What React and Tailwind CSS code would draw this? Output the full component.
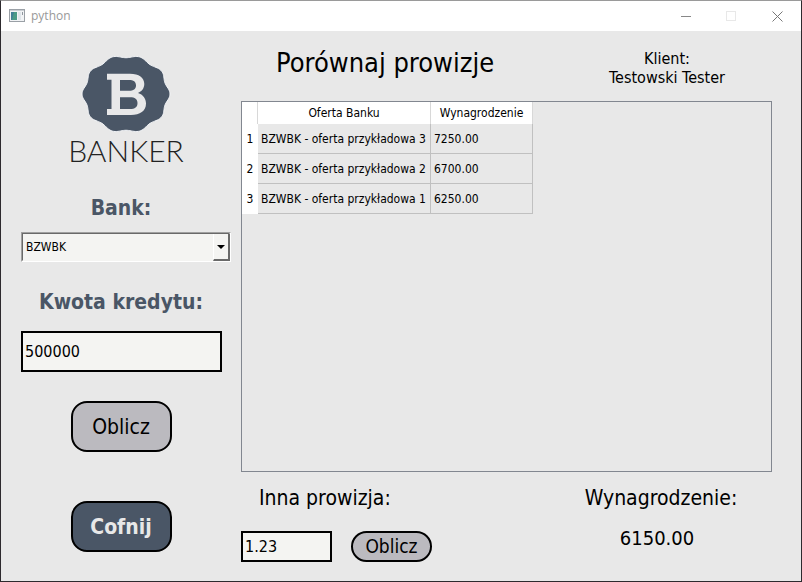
const badge = (() => {
  const pts = [];
  for (let i = 0; i <= 200; i++) {
    const t = (i / 200) * Math.PI * 2;
    const r = 0.965 + 0.035 * Math.cos(10 * t);
    pts.push(`${(48 + 44 * r * Math.cos(t)).toFixed(2)} ${(42 + 39 * r * Math.sin(t)).toFixed(2)}`);
  }
  return `M${pts.join("L")}Z`;
})();

const offers = [
  ["BZWBK - oferta przykładowa 3", "7250.00"],
  ["BZWBK - oferta przykładowa 2", "6700.00"],
  ["BZWBK - oferta przykładowa 1", "6250.00"],
];

function TitleBar() {
  return (
    <header className="flex h-[30px] items-center bg-white pl-2 font-['Open_Sans',sans-serif] text-xs text-[#999999]">
      <svg width="16" height="14" viewBox="0 0 16 14" aria-hidden="true">
        <rect x="0.5" y="0.5" width="15" height="12" fill="#f1f3f5" stroke="#9aa0a6" />
        <path d="M1 1.500H15" stroke="#c9ced3" />
        <rect x="2" y="3" width="6" height="8" fill="#4a9a86" />
        <path d="M2 3H5L3 11H2Z" fill="#3f7f95" />
        <rect x="9" y="3" width="3" height="8" fill="#dfe5ea" />
        <rect x="13" y="3" width="1" height="3" fill="#8f979f" />
      </svg>
      <span className="ml-1.5 flex-1">python</span>
      <div className="flex h-full pr-px">
        <button aria-label="Minimalizuj" className="grid h-full w-[45px] place-items-center">
          <svg width="10" height="10"><path d="M0 5.5H10" stroke="#888" /></svg>
        </button>
        <button aria-label="Maksymalizuj" disabled className="grid h-full w-[46px] place-items-center">
          <svg width="10" height="10"><rect x="0.5" y="0.5" width="9" height="9" fill="none" stroke="#e8e8e8" /></svg>
        </button>
        <button aria-label="Zamknij" className="grid h-full w-[46px] place-items-center">
          <svg width="11" height="11"><path d="M0.5 0.5L10.5 10.5M10.5 0.5L0.5 10.5" stroke="#777" /></svg>
        </button>
      </div>
    </header>
  );
}

function Logo() {
  return (
    <div className="flex flex-col items-center">
      <svg width="96" height="84" viewBox="0 0 96 84" aria-hidden="true">
        <path d={badge} fill="#4a5666" stroke="#f4f6f9" strokeWidth="1" />
        <path
          fillRule="evenodd"
          fill="#e8e8e9"
          d="M29 21.700H52C61 21.700 66.300 25.500 66.300 32C66.300 36.500 63.500 39.500 60 41C65 42.500 68 46.500 68 51.500C68 59 62 63 53 63H29V57H33.500V27.700H29ZM42 28V38.700H51C55.500 38.700 58 37 58 33.400C58 29.800 55.500 28 51 28ZM42 45.300V57H52C57 57 59.500 55 59.500 51C59.500 47.300 57 45.300 52 45.300Z"
        />
      </svg>
      <span className="font-[Lato,sans-serif] text-[30px] leading-7 font-light text-[#222222]">BANKER</span>
    </div>
  );
}

export default function App() {
  return (
    <div className="flex min-h-screen flex-col border border-[#2d2a2e] border-t-[#9a9a9a] bg-[#e8e8e8] font-['DejaVu_Sans_Condensed','Noto_Sans',sans-serif] text-black">
      <TitleBar />
      <main className="flex flex-1 pr-[29px] pl-5">
        <section className="flex w-[210px] shrink-0 flex-col">
          <div className="flex flex-col items-center pt-[21px]">
            <Logo />
          </div>
          <label htmlFor="bank" className="mt-7 w-[200px] text-center text-[21px] leading-8 font-bold text-[#4a5666]">Bank:</label>
          <div className="mt-2 grid border border-[#a0a0a0] border-r-white border-b-white">
            <select id="bank" className="col-start-1 row-start-1 h-7 appearance-none border border-[#696969] border-r-[#e3e3e3] border-b-[#f4f4f2] bg-[#f4f4f2] pl-[3px] text-[12px]">
              <option>BZWBK</option>
            </select>
            <span className="pointer-events-none col-start-1 row-start-1 mt-px grid w-[17px] place-items-center justify-self-end border-r-2 border-b-2 border-l border-l-white border-[#696969] bg-[#f4f4f2]">
              <svg width="8" height="4"><path d="M0 0H8L4 4Z" fill="#000" /></svg>
            </span>
          </div>
          <label htmlFor="amount" className="mt-6 w-[200px] text-center text-[21px] leading-8 font-bold text-[#4a5666]">Kwota kredytu:</label>
          <input id="amount" defaultValue="500000" className="mt-[13px] h-[41px] w-[201px] border-2 border-black bg-[#f4f4f2] px-0.5 text-base" />
          <div className="flex w-[200px] flex-col items-center gap-[49px] pt-[29px]">
            <button className="h-[51px] w-[101px] rounded-2xl border-2 border-black bg-[#bbbabf] pt-0.5 text-[21px]">Oblicz</button>
            <button className="h-[51px] w-[101px] rounded-2xl border-2 border-black bg-[#4a5666] pt-0.5 text-[21px] font-bold text-[#e8e8e8]">Cofnij</button>
          </div>
        </section>
        <section className="ml-[10px] flex min-w-0 flex-1 flex-col">
          <div className="flex h-[70px] justify-between">
            <h1 className="pt-4 pl-[35px] text-[27px] leading-8">Porównaj prowizje</h1>
            <p className="w-[210px] pt-[18px] text-center text-base leading-[19px]">Klient:<br />Testowski Tester</p>
          </div>
          <div className="h-[371px] border border-[#828790]">
            <table className="border-separate border-spacing-0 text-[12px]">
              <thead>
                <tr className="h-[22px] bg-white">
                  <th className="w-4 border-r border-[#d8d8d8] p-0" aria-label="Nr" />
                  <th className="w-[173px] border-r border-[#d8d8d8] p-0 font-normal">Oferta Banku</th>
                  <th className="w-[102px] border-r border-[#d8d8d8] p-0 font-normal">Wynagrodzenie</th>
                </tr>
              </thead>
              <tbody>
                {offers.map(([name, pay], i) => (
                  <tr key={name} className="h-[30px]">
                    <th className="bg-white p-0 text-center font-normal">{i + 1}</th>
                    <td className="border-r border-b border-[#c0c0c0] p-0 pl-[3px] whitespace-nowrap">{name}</td>
                    <td className="border-r border-b border-[#c0c0c0] p-0 pl-[3px]">{pay}</td>
                  </tr>
                ))}
              </tbody>
            </table>
          </div>
          <div className="flex justify-between">
            <div>
              <label htmlFor="rate" className="mt-2.5 block pl-[18px] text-[21px] leading-8">Inna prowizja:</label>
              <div className="mt-[17px] flex gap-[19px]">
                <input id="rate" defaultValue="1.23" className="h-[31px] w-[91px] border-2 border-black bg-[#f4f4f2] px-0.5 text-base" />
                <button className="h-[31px] w-[81px] rounded-2xl border-2 border-black bg-[#bbbabf] text-[19px] leading-none">Oblicz</button>
              </div>
            </div>
            <div className="w-[222px] text-center leading-8">
              <p className="mt-2.5 text-[21px] leading-8">Wynagrodzenie:</p>
              <output className="mt-2 block pr-2 text-[20px] leading-8">6150.00</output>
            </div>
          </div>
        </section>
      </main>
    </div>
  );
}
